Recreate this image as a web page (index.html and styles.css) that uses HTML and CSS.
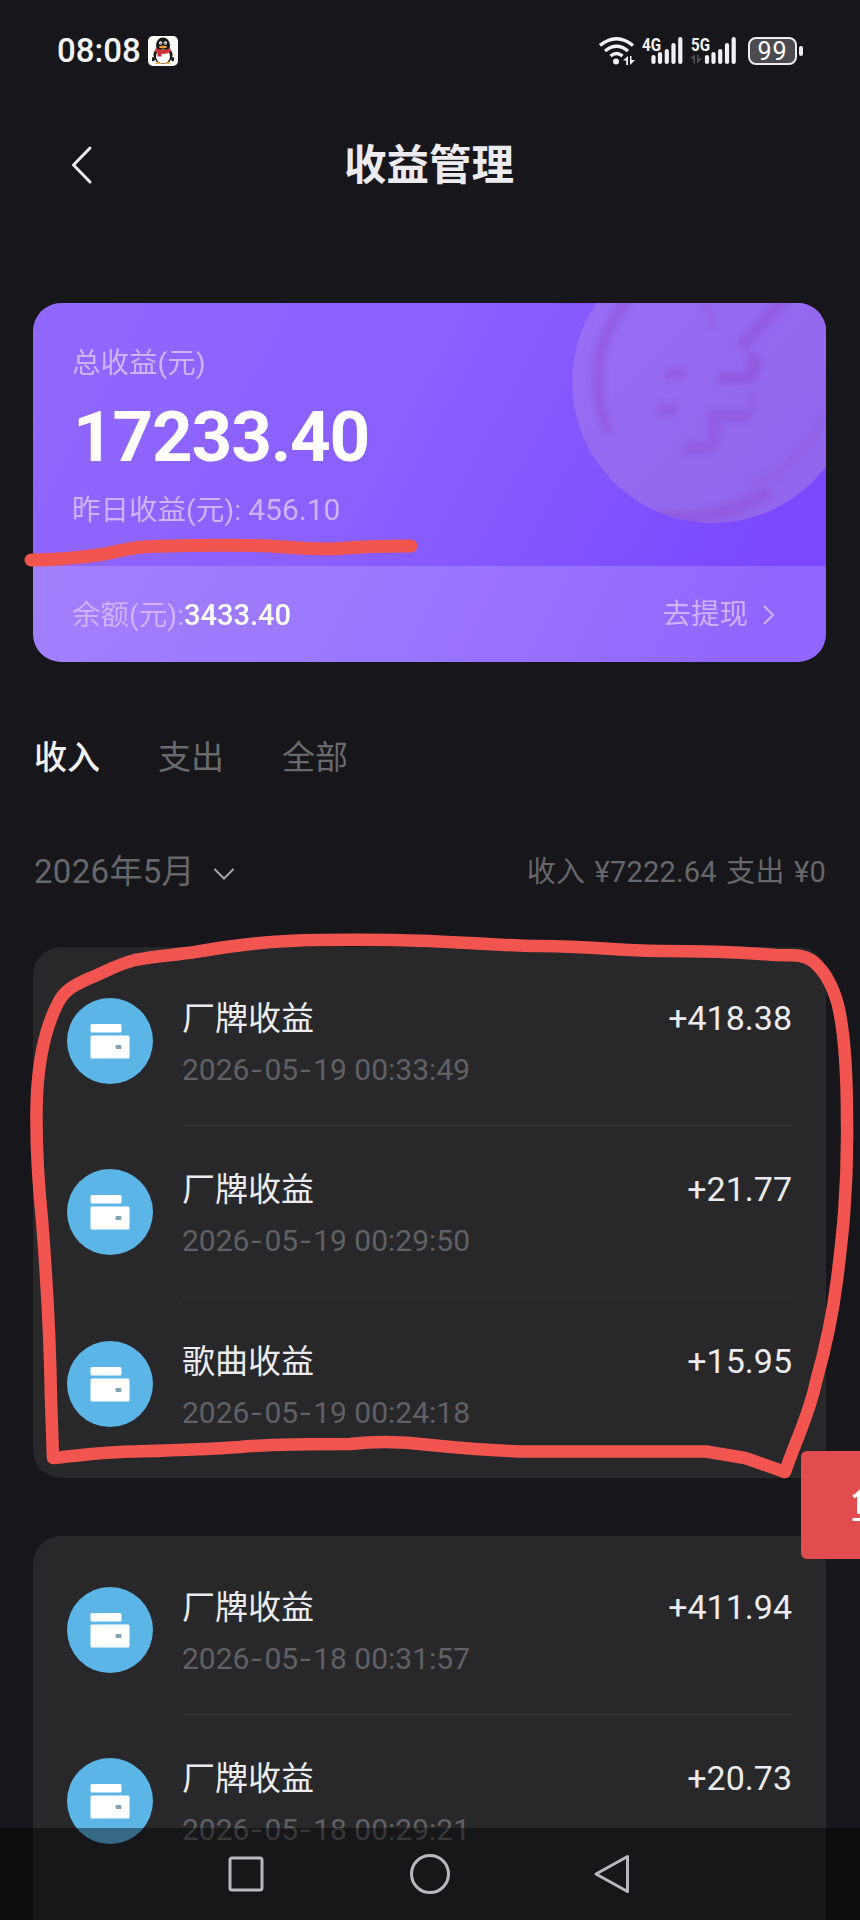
FILE: index.html
```html
<!DOCTYPE html>
<html lang="zh-CN">
<head>
<meta charset="utf-8">
<title>收益管理</title>
<link rel="stylesheet" href="styles.css">
</head>
<body>
<svg class="defs" width="0" height="0">
  <symbol id="wallet" viewBox="0 0 86 86">
    <rect x="23.500" y="26" width="31" height="8.500" rx="1.500" fill="#fff"/>
    <path d="M25 37.500h36a1.500 1.500 0 0 1 1.500 1.500v20a1.500 1.500 0 0 1-1.500 1.500H25a1.500 1.500 0 0 1-1.500-1.500V39a1.500 1.500 0 0 1 1.500-1.500z" fill="#fff"/>
    <rect x="48.500" y="47" width="6" height="4" rx="1" fill="#82a5b5"/>
  </symbol>
</svg>
<div class="screen">
  <header class="status">
    <div class="status-left">
      <span class="clock">08:08</span>
      <svg class="qq" viewBox="0 0 30 30">
        <rect width="30" height="30" rx="5" fill="#fafafa"/>
        <path d="M5 21c-1 3-.6 4 0 4 1 0 2-2 2-2M25 21c1 3 .6 4 0 4-1 0-2-2-2-2" fill="#111" stroke="#111"/>
        <ellipse cx="15" cy="19" rx="9.500" ry="9" fill="#151515"/>
        <ellipse cx="15" cy="9.500" rx="7" ry="8" fill="#151515"/>
        <ellipse cx="15" cy="20.500" rx="7" ry="7" fill="#fff"/>
        <path d="M8 12q7 4 14 0l1 4q-8 4-16 0z" fill="#d5343d"/>
        <path d="M9.500 15l4 1v4.500h-4z" fill="#c92f38"/>
        <circle cx="12.700" cy="7" r="1.700" fill="#fff"/><circle cx="17.300" cy="7" r="1.700" fill="#fff"/>
        <circle cx="13" cy="7.200" r=".7" fill="#111"/><circle cx="17" cy="7.200" r=".7" fill="#111"/>
        <ellipse cx="15" cy="11" rx="4" ry="1.300" fill="#f0a23b"/>
        <path d="M7 27q4-2 7 1H8zM23 27q-4-2-7 1h6z" fill="#edae45"/>
      </svg>
    </div>
    <div class="status-right">
      <svg class="wifi" viewBox="0 0 36 28" fill="none" stroke="#f2f2f4" stroke-width="3.400">
        <path d="M1 8.500Q17.500-5 34 8.500M6 14q11.500-9.500 23 0M11.500 19q6-5 12 0"/>
        <circle cx="17" cy="24.500" r="3" fill="#f2f2f4" stroke="none"/>
        <path d="M24 23.500l5-4.500v9h-1.800v-4.500zM36 23l-5 5v-9h1.500v4z" fill="#f2f2f4" stroke="none"/>
      </svg>
      <svg class="signal signal-a" viewBox="0 0 46 30">
        <text x="1" y="14.500" class="net" textLength="19" lengthAdjust="spacingAndGlyphs">4G</text>
        <path d="M12.500 26v-5M19 26v-8M25.800 26V15M32.500 26V9M39.300 26V3" stroke="#f2f2f4" stroke-width="4.200" stroke-linecap="round"/>
      </svg>
      <svg class="signal signal-b" viewBox="0 0 50 30">
        <text x="1" y="14.500" class="net" textLength="19" lengthAdjust="spacingAndGlyphs">5G</text>
        <path d="M0 22.500l5-4v9H3.500v-5zM12 22.500l-5 5v-9h1.500v4z" fill="#56565a"/>
        <path d="M17 26v-5M23.500 26v-8M30.200 26V15M37 26V9M43.700 26V3" stroke="#f2f2f4" stroke-width="4.200" stroke-linecap="round"/>
      </svg>
      <span class="battery">99</span><span class="battery-tip"></span>
    </div>
  </header>

  <nav class="topbar">
    <svg class="back" viewBox="0 0 24 40"><path d="M20 3L3.500 20 20 37" fill="none" stroke="#ececf0" stroke-width="3" stroke-linecap="round" stroke-linejoin="round"/></svg>
    <h1>收益管理</h1>
  </nav>

  <section class="wallet-card">
    <svg class="coin" viewBox="0 0 256 225">
      <defs>
        <linearGradient id="cg" x1="0" y1="0" x2="1" y2="1"><stop offset="0" stop-color="#9a6df5"/><stop offset=".65" stop-color="#9469ee"/><stop offset="1" stop-color="#9263ed"/></linearGradient>
        <filter id="soft"><feGaussianBlur stdDeviation="2.500"/></filter>
        <clipPath id="disc"><circle cx="143" cy="79" r="141"/></clipPath>
      </defs>
      <circle cx="143" cy="79" r="141" fill="url(#cg)"/>
      <g clip-path="url(#disc)">
        <g fill="none" stroke="#9057db" filter="url(#soft)">
          <path d="M62-8C24 32 20 86 39 130" stroke-width="11" opacity=".6"/>
          <path d="M84 214Q145 222 200 188" stroke-width="14" opacity=".7"/>
          <path d="M256 112Q225 172 180 180" stroke-width="9" opacity=".3"/>
          <path d="M134 0q7 10 7 24" stroke-width="8" opacity=".4"/>
          <path d="M216-6l-46 50" stroke-width="13" opacity=".7"/>
        </g>
        <g fill="#9057db" filter="url(#soft)">
          <path d="M96 65h21l-3 11H94zM88 101h20l-3 12H86z" opacity=".6"/>
          <path d="M148 70h28V50q12-4 16 6 1 14-10 25h-34z" opacity=".75"/>
          <path d="M138 107h42V88q8 0 5 18l-6 13h-26l-4 24-9 8h-28l6-13h20z" opacity=".65"/>
        </g>
      </g>
    </svg>
    <div class="total">
      <p class="label">总收益(元)</p>
      <p class="sum">17233.40</p>
      <p class="label yesterday">昨日收益(元): <span class="figure">456.10</span></p>
    </div>
    <div class="balance">
      <p class="label">余额(元):<b>3433.40</b></p>
      <a class="withdraw">去提现<svg viewBox="0 0 14 22"><path d="M2 2l9 9-9 9" fill="none" stroke="#cfb2fa" stroke-width="2"/></svg></a>
    </div>
  </section>

  <div class="tabs"><span class="active">收入</span><span>支出</span><span>全部</span></div>

  <div class="filter">
    <span class="month">2026年5月</span>
    <svg class="down" viewBox="0 0 22 14"><path d="M1.500 2L11 11.500 20.500 2" fill="none" stroke="#a7a7ab" stroke-width="2"/></svg>
    <span class="summary">收入 ¥7222.64 支出 ¥0</span>
  </div>

  <section class="records">
    <article><svg class="icon"><use href="#wallet"/></svg><div class="entry"><div><h2>厂牌收益</h2><time>2026<i>-</i>05<i>-</i>19 00:33:49</time></div><strong>+418.38</strong></div></article>
    <article><svg class="icon"><use href="#wallet"/></svg><div class="entry"><div><h2>厂牌收益</h2><time>2026<i>-</i>05<i>-</i>19 00:29:50</time></div><strong>+21.77</strong></div></article>
    <article><svg class="icon"><use href="#wallet"/></svg><div class="entry"><div><h2>歌曲收益</h2><time>2026<i>-</i>05<i>-</i>19 00:24:18</time></div><strong>+15.95</strong></div></article>
  </section>
  <section class="records">
    <article><svg class="icon"><use href="#wallet"/></svg><div class="entry"><div><h2>厂牌收益</h2><time>2026<i>-</i>05<i>-</i>18 00:31:57</time></div><strong>+411.94</strong></div></article>
    <article><svg class="icon"><use href="#wallet"/></svg><div class="entry"><div><h2>厂牌收益</h2><time>2026<i>-</i>05<i>-</i>18 00:29:21</time></div><strong>+20.73</strong></div></article>
  </section>

  <svg class="marks" viewBox="0 0 860 1920" fill="none" stroke="#f25550" stroke-width="13" stroke-linecap="round" stroke-linejoin="round">
    <path d="M31 560C55 560 85 557 105 554C125 550 132 547 150 546.500C200 545 240 545 270 546C300 548 320 550 340 548.500C365 546 380 546 411 546"/>
    <path stroke-width="12.500" d="M53 1458L51 1400C50 1330 46 1270 42 1220C38 1180 36 1150 36.500 1110C37 1070 43 1032 58 1003C64 991 72 986 90 978C105 972 118 964 135 960C155 956 175 955 195 952C240 944 280 940 320 940C370 939 400 940 430 941C470 943 500 945 530 946C590 945 610 951 660 951C710 951 740 952 775 955C798 955 806 955 815 963C826 973 834 990 838 1005C845 1035 847 1080 847 1120C848 1190 842 1240 837 1280C832 1320 825 1350 816 1382C809 1415 797 1437 785 1472Q760 1463 745 1458L706 1451.500H520C480 1450 450 1447 430 1445C400 1441 375 1441 350 1444C310 1444 270 1444 240 1447C200 1450 150 1451 120 1452C95 1453 85 1455 53 1458Z"/>
  </svg>
  <aside class="float-tag">鱼</aside>
  <footer class="navbar">
    <svg viewBox="0 0 42 42"><rect x="5" y="5" width="32" height="32" rx="2"/></svg>
    <svg viewBox="0 0 42 42"><circle cx="21" cy="21" r="18.500"/></svg>
    <svg viewBox="0 0 42 42"><path d="M34.500 3.500v35L3 21z"/></svg>
  </footer>
</div>
</body>
</html>
```
FILE: styles.css
```css
* { box-sizing: border-box; }
body { margin: 0; background: #17171b; }
h1, h2, p { margin: 0; font-weight: 400; }
.defs { display: block; height: 0; }
.screen {
  position: relative;
  width: 860px;
  height: 1920px;
  overflow: hidden;
  background: #17171b;
  color: #ececf0;
  font-family: Roboto, "Noto Sans CJK SC", sans-serif;
}

/* status bar */
.status { display: flex; justify-content: space-between; height: 100px; padding: 30px 57px 0 57px; }
.status-left, .status-right { display: flex; align-items: center; height: 42px; }
.clock { width: 91px; font-size: 33px; line-height: 42px; font-weight: 500; letter-spacing: 0; color: #f4f4f6; }
.qq { width: 30px; height: 30px; }
.wifi { width: 36px; height: 28px; margin-right: 6px; }
.signal { height: 30px; overflow: visible; }
.signal-a { width: 46px; margin-right: 3px; }
.signal-b { width: 50px; margin-right: 8px; }
.net { font: 700 18px Roboto, sans-serif; fill: #f2f2f4; }
.battery {
  width: 49px;
  height: 28px;
  border: 2px solid #ececee;
  border-radius: 8px;
  background: #4b4b4f;
  color: #fff;
  font-size: 25px;
  line-height: 25px;
  letter-spacing: 1px;
  text-align: center;
}
.battery-tip { width: 4px; height: 10px; margin-left: 2px; border-radius: 2px; background: #ececee; }

/* title bar */
.topbar { display: flex; align-items: center; height: 130px; padding: 0 72px 0 70px; }
.back { width: 24px; height: 40px; }
.topbar h1 { flex: 1; margin-right: 24px; padding-top: 2px; text-align: center; font-size: 42.500px; line-height: 60px; font-weight: 700; }

/* wallet card */
.wallet-card {
  position: relative;
  width: 793px;
  height: 359px;
  margin: 73px 0 0 33px;
  border-radius: 28px;
  overflow: hidden;
  background: linear-gradient(118deg, #9169fd 0%, #895ffe 45%, #7b48fe 90%);
}
.coin { position: absolute; right: 0; top: 0; width: 256px; height: 225px; }
.total { position: relative; height: 263px; padding: 39px 39px 0; }
.label { font-size: 28.500px; line-height: 44px; color: #cfb2fa; }
.sum { padding: 16px 0 16px 1px; font-size: 71px; line-height: 70px; font-weight: 700; letter-spacing: -1.200px; color: #fff; }
.figure { font-size: 30px; }
.balance {
  position: relative;
  display: flex;
  justify-content: space-between;
  align-items: center;
  height: 96px;
  padding: 2px 50px 0 39px;
  background: rgba(255, 255, 255, .17);
}
.balance b { font-size: 29px; font-weight: 500; color: #fff; }
.withdraw { display: flex; align-items: center; font-size: 28.500px; line-height: 44px; color: #cfb2fa; }
.withdraw svg { width: 14px; height: 22px; margin-left: 14px; }

/* tabs and filter */
.tabs { display: flex; gap: 58px; padding: 72px 0 0 34px; font-size: 33px; line-height: 48px; color: #6a6a6e; }
.tabs .active { font-weight: 500; color: #f2f2f5; }
.filter { display: flex; align-items: center; height: 48px; margin-top: 66px; padding: 0 34px; color: #66666b; }
.month { width: 179px; font-size: 33px; line-height: 48px; letter-spacing: .3px; }
.down { width: 22px; height: 14px; margin-top: 3px; }
.summary { margin-left: auto; font-size: 29px; line-height: 44px; letter-spacing: .2px; word-spacing: 2px; }

/* records */
.records { width: 793px; margin: 51px 0 58px 33px; padding: 8px 0 9px; border-radius: 28px; background: #28282b; }
.records + .records { min-height: 420px; margin-bottom: 0; }
article { display: flex; height: 171.300px; padding: 0 34px; }
.icon { flex: none; width: 86px; height: 86px; margin-top: 43px; border-radius: 50%; background: #5cb5e7; }
.entry { display: flex; flex: 1; justify-content: space-between; margin-left: 29px; padding-top: 39px; border-bottom: 1px solid #343437; }
article:last-child .entry { border-bottom: 0; }
h2 { font-size: 33px; line-height: 50px; color: #ececf0; }
time { display: block; margin-top: 4px; font-size: 30px; line-height: 44px; color: #606065; }
time i { display: inline-block; width: 15px; text-align: center; font-style: normal; transform: scaleX(1.300); }
strong { margin-top: -1px; font-size: 34px; line-height: 50px; font-weight: 400; color: #ececf0; }

/* overlays */
.marks { position: absolute; inset: 0; width: 860px; height: 1920px; }
.float-tag {
  position: absolute;
  left: 801px;
  top: 1451px;
  width: 59px;
  height: 108px;
  padding-left: 49px;
  overflow: hidden;
  border-radius: 6px 0 0 6px;
  background: #e14c4e;
  color: #fff;
  font-size: 43px;
  line-height: 106px;
  white-space: nowrap;
}
.navbar {
  position: absolute;
  left: 0;
  bottom: 0;
  display: flex;
  justify-content: space-between;
  width: 860px;
  height: 92px;
  padding: 25px 225px;
  background: rgba(0, 0, 0, .42);
}
.navbar svg { width: 42px; height: 42px; fill: none; stroke: #b9b9bd; stroke-width: 3; stroke-linejoin: round; }
```
